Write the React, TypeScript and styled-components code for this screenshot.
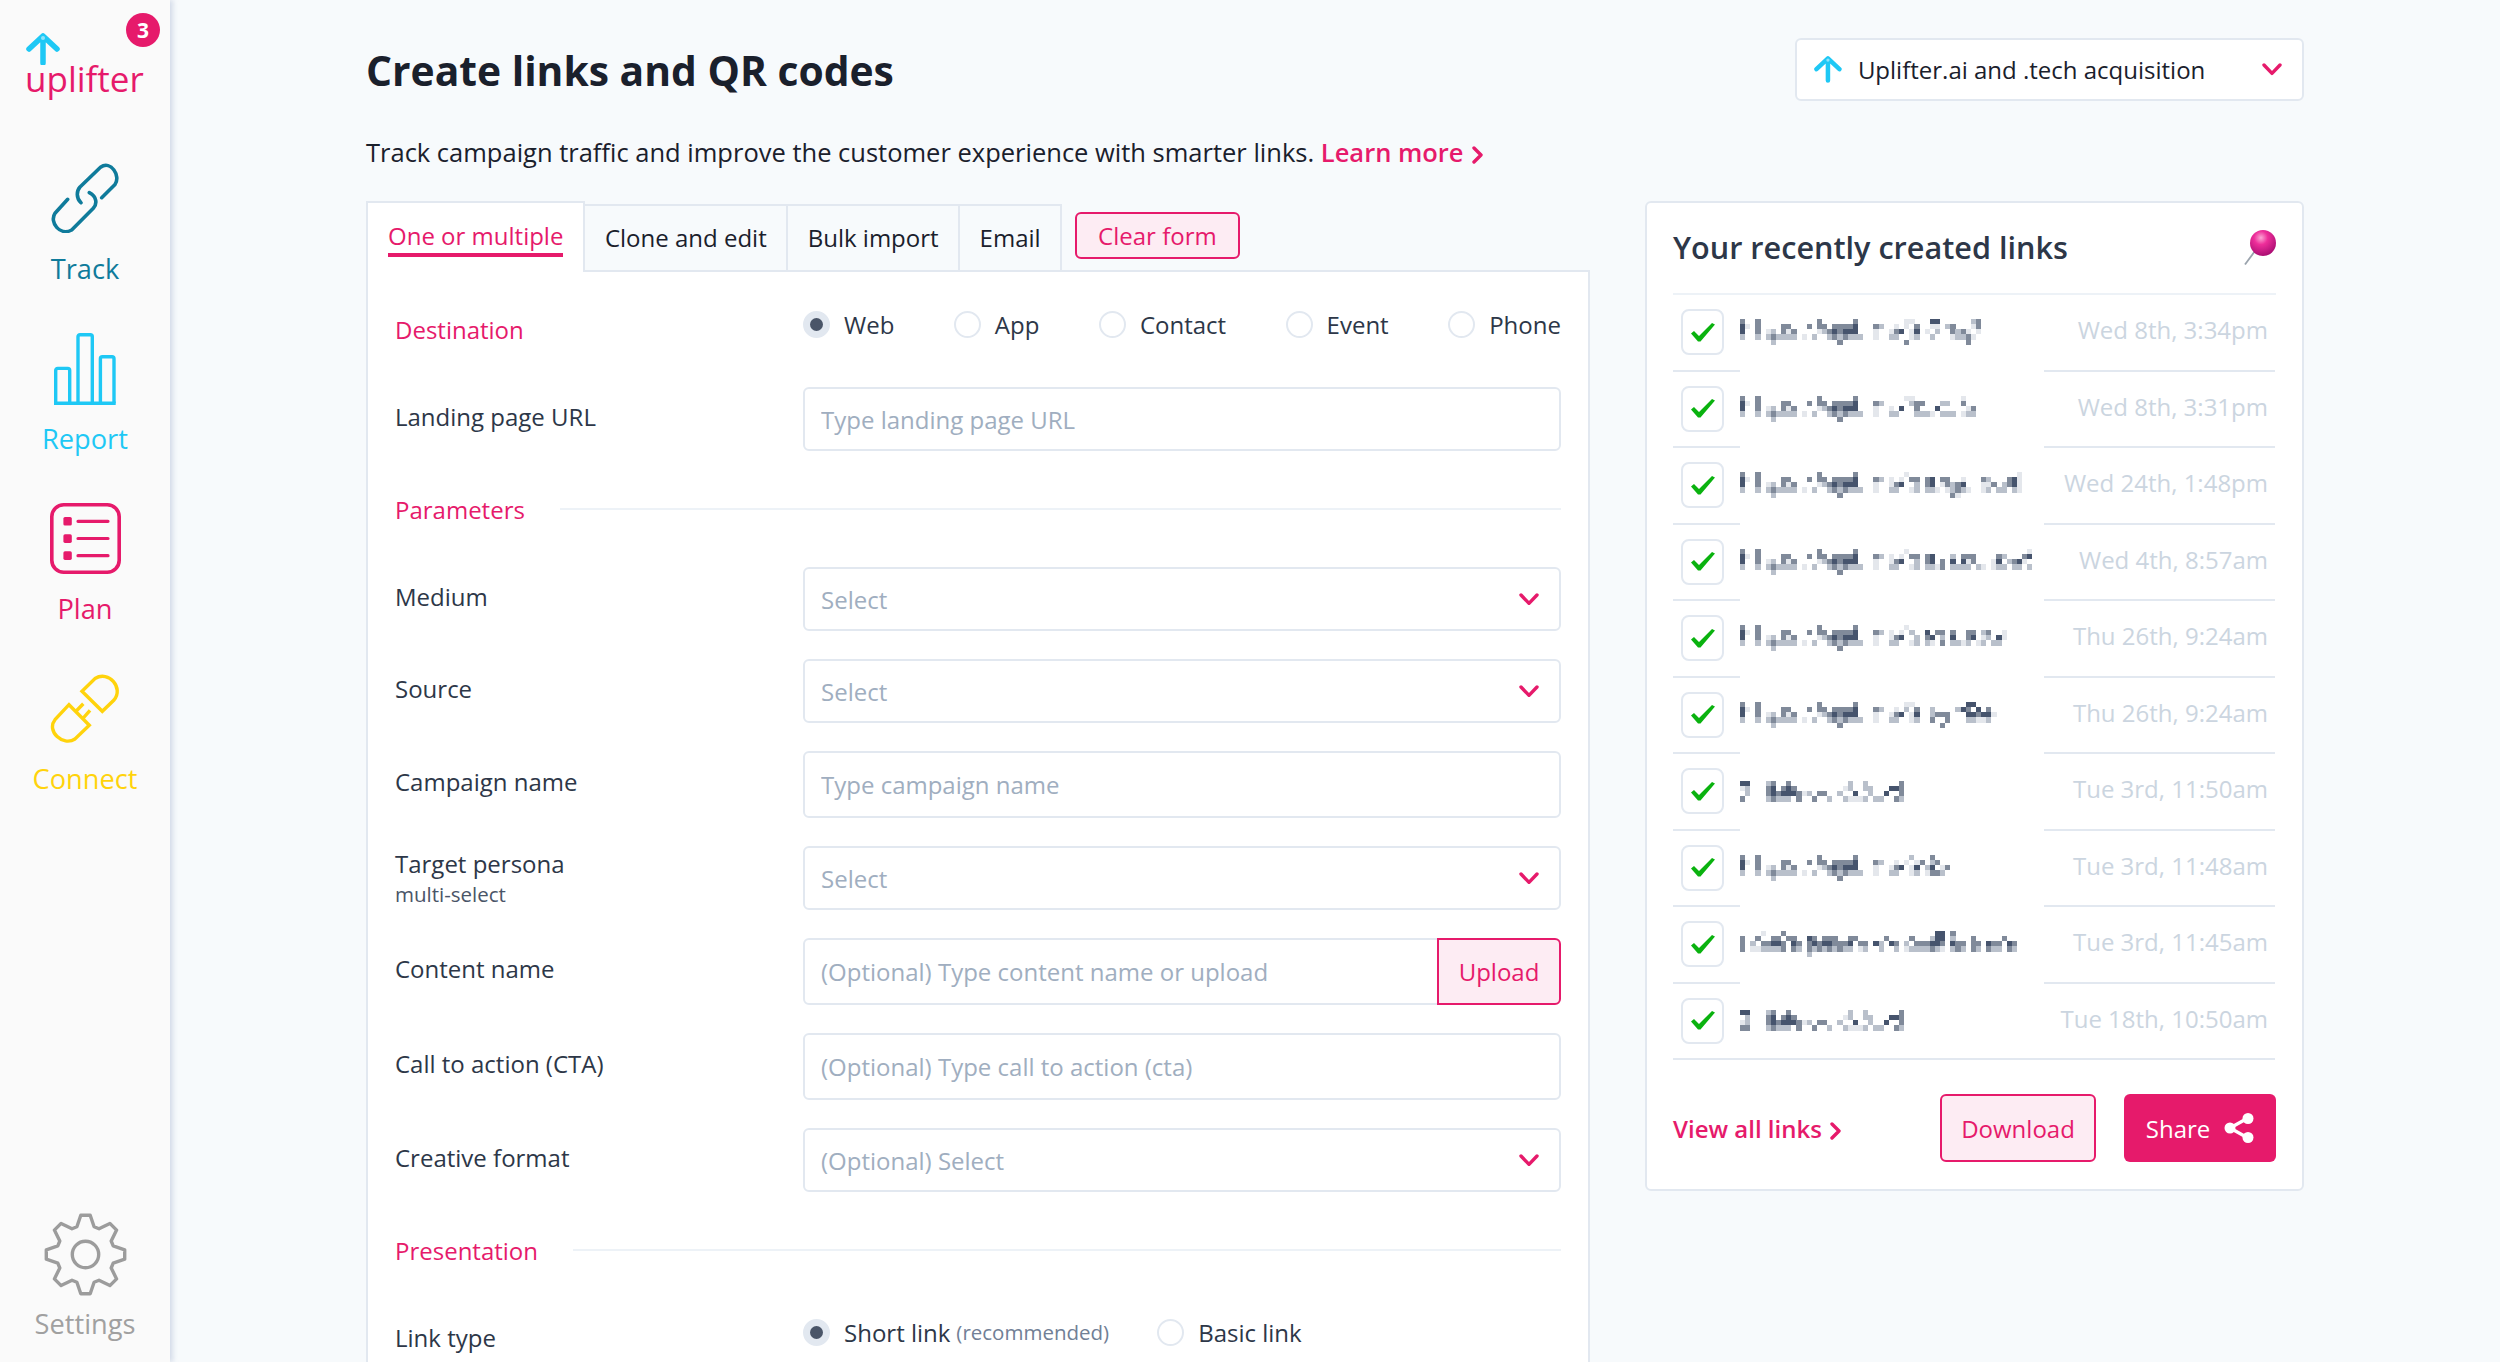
import styled, { createGlobalStyle } from "styled-components";

const pink = "#e61a6b";
const border = "#e2e8f0";

const GlobalStyle = createGlobalStyle`
  html, body {
    margin: 0;
    padding: 0;
    height: 100%;
    background: #f7fafc;
    font-family: "Open Sans", "Noto Sans", sans-serif;
    font-size: 24px;
    color: #2d3748;
    overflow: hidden;
  }
  * { box-sizing: border-box; }
  input::placeholder { color: #a0aec0; opacity: 1; }
`;

const Page = styled.div`
  display: flex;
  height: 100vh;
  overflow: hidden;
`;

const Sidebar = styled.aside`
  flex: 0 0 170px;
  display: flex;
  flex-direction: column;
  align-items: center;
  padding-bottom: 20px;
  background: #fafafa;
  box-shadow: 3px 0 5px rgba(160, 174, 205, 0.4);
  z-index: 2;
`;

const LogoBlock = styled.div`
  position: relative;
  align-self: stretch;
  height: 163px;
  padding: 33px 0 0 25px;
`;

const LogoArrow = styled.div`
  margin-left: 1px;
  height: 32px;
`;

const LogoText = styled.div`
  margin-top: -4px;
  font-size: 35px;
  line-height: 36px;
  color: ${pink};
`;

const Badge = styled.span`
  position: absolute;
  top: 13px;
  left: 126px;
  width: 34px;
  height: 34px;
  border-radius: 50%;
  background: ${pink};
  color: #fff;
  font-size: 21px;
  font-weight: 700;
  line-height: 34px;
  text-align: center;
`;

const NavItem = styled.a<{ $color: string }>`
  display: flex;
  flex-direction: column;
  align-items: center;
  height: 170px;
  color: ${(p) => p.$color};
  font-size: 27.2px;
`;

const SettingsItem = styled.a`
  display: flex;
  flex-direction: column;
  align-items: center;
  margin-top: auto;
  color: #a0a0a0;
  font-size: 27.2px;
`;

const NavIcon = styled.div`
  height: 70px;
`;

const NavLabel = styled.span<{ $gap?: number }>`
  margin-top: ${(p) => p.$gap ?? 18}px;
  line-height: 36px;
`;

const Main = styled.main`
  flex: 1;
  padding: 38px 196px 0;
  min-width: 0;
`;

const Header = styled.header`
  display: flex;
  align-items: center;
  justify-content: space-between;
  height: 63px;
`;

const Title = styled.h1`
  margin: 0;
  font-size: 40.8px;
  font-weight: 700;
  color: #1a202c;
`;

const AccountSelect = styled.div`
  display: flex;
  align-items: center;
  width: 509px;
  height: 63px;
  padding: 0 20px 0 17px;
  background: #fff;
  border: 2px solid ${border};
  border-radius: 6px;
  color: #1a202c;
`;

const AccountName = styled.span`
  flex: 1;
  margin-left: 16px;
`;

const Intro = styled.p`
  margin: 33px 0 0;
  font-size: 25.5px;
  line-height: 36px;
  color: #1a202c;
`;

const TextLink = styled.a`
  color: ${pink};
  font-weight: 600;
  white-space: nowrap;
  svg { margin-left: 8px; }
`;

const Columns = styled.div`
  display: grid;
  grid-template-columns: 1224px 659px;
  justify-content: space-between;
  align-items: start;
  margin-top: 31px;
`;

const TabBar = styled.div`
  display: flex;
  align-items: flex-end;
  height: 69px;
`;

const ActiveTab = styled.div`
  position: relative;
  z-index: 1;
  height: 71px;
  margin-bottom: -2px;
  padding: 16px 20px 0;
  background: #fff;
  border: 2px solid ${border};
  border-bottom: 0;
  color: ${pink};
`;

const ActiveTabText = styled.span`
  display: block;
  line-height: 34px;
  border-bottom: 4px solid ${pink};
`;

const Tab = styled.div`
  display: flex;
  align-items: center;
  height: 66px;
  padding: 0 19.5px 2px;
  border: 2px solid ${border};
  border-left-width: 0;
  border-bottom: 0;
  color: #1a202c;
`;

const ClearButton = styled.button`
  align-self: flex-start;
  height: 47px;
  margin: 11px 0 0 13px;
  padding: 0 21px;
  background: #fdecf3;
  border: 2px solid ${pink};
  border-radius: 6px;
  color: ${pink};
  font: inherit;
`;

const Panel = styled.section`
  height: 1200px;
  padding: 25px 27px 0;
  background: #fff;
  border: 2px solid ${border};
`;

const Row = styled.div`
  display: grid;
  grid-template-columns: 408px 1fr;
  align-items: center;
  margin-bottom: 28px;
`;

const RadioRow = styled.div`
  display: grid;
  grid-template-columns: 408px 1fr;
  align-items: start;
  height: 62px;
  padding-top: 14px;
  margin-bottom: 28px;
`;

const Label = styled.label`
  display: block;
  line-height: 38px;
  padding-bottom: 5px;
`;

const RadioLabel = styled(Label)<{ $accent?: boolean }>`
  padding: 0;
  color: ${(p) => (p.$accent ? pink : "inherit")};
`;

const StackedLabel = styled.label`
  display: block;
`;

const StackedMain = styled.div`
  line-height: 33px;
`;

const SubLabel = styled.div`
  font-size: 20.5px;
  line-height: 29px;
  color: #4a5568;
`;

const SectionHeading = styled.div<{ $after?: number }>`
  display: flex;
  align-items: center;
  gap: 35px;
  height: 60px;
  margin-bottom: ${(p) => p.$after ?? 28}px;
  color: ${pink};
  &::after {
    content: "";
    flex: 1;
    height: 2px;
    background: #edf2f7;
  }
`;

const RadioGroup = styled.div<{ $spread?: boolean }>`
  display: flex;
  justify-content: ${(p) => (p.$spread ? "space-between" : "flex-start")};
  gap: 48px;
  height: 26px;
  align-items: center;
`;

const RadioOption = styled.span`
  display: flex;
  align-items: center;
  gap: 14px;
  color: #2d3748;
`;

const RadioDot = styled.span<{ $on?: boolean }>`
  display: flex;
  align-items: center;
  justify-content: center;
  width: 27px;
  height: 27px;
  border-radius: 50%;
  background: ${(p) => (p.$on ? border : "#fff")};
  border: 2px solid ${border};
  &::after {
    content: "";
    display: ${(p) => (p.$on ? "block" : "none")};
    width: 13px;
    height: 13px;
    border-radius: 50%;
    background: #4a5568;
  }
`;

const Note = styled.span`
  margin-left: -8px;
  font-size: 20.5px;
  color: #718096;
`;

const TextInput = styled.input<{ $grouped?: boolean }>`
  display: block;
  width: 100%;
  height: ${(p) => (p.$grouped ? 67 : 64)}px;
  padding: 0 16px;
  background: #fff;
  border: 2px solid ${border};
  border-radius: ${(p) => (p.$grouped ? "6px 0 0 6px" : "6px")};
  font: inherit;
  outline: none;
`;

const TallInput = styled(TextInput)`
  height: 67px;
  border-radius: 6px;
`;

const SelectBox = styled.div`
  display: flex;
  align-items: center;
  justify-content: space-between;
  height: 64px;
  padding: 0 20px 0 16px;
  background: #fff;
  border: 2px solid ${border};
  border-radius: 6px;
  color: #a0aec0;
`;

const InputGroup = styled.div`
  display: flex;
`;

const UploadButton = styled.button`
  flex: 0 0 124px;
  height: 67px;
  margin-left: -2px;
  background: #fdecf3;
  border: 2px solid ${pink};
  border-radius: 0 6px 6px 0;
  color: ${pink};
  font: inherit;
`;

const Card = styled.section`
  height: 990px;
  padding: 0 26px;
  background: #fff;
  border: 2px solid ${border};
  border-radius: 6px;
`;

const CardHead = styled.div`
  display: flex;
  align-items: center;
  justify-content: space-between;
  height: 92px;
  padding-bottom: 2px;
  border-bottom: 2px solid #edf2f7;
`;

const CardTitle = styled.h2`
  margin: 0;
  font-size: 30.6px;
  font-weight: 600;
  color: #2d3748;
`;

const LinkRow = styled.div`
  display: grid;
  grid-template-columns: 67px 304px 231px;
  height: 76.5px;
`;

const CheckCell = styled.div`
  display: flex;
  align-items: center;
  padding-left: 8px;
  border-bottom: 2px solid ${border};
`;

const CheckBox = styled.span`
  display: flex;
  align-items: center;
  justify-content: center;
  width: 43px;
  height: 46px;
  border: 2px solid ${border};
  border-radius: 8px;
`;

const UrlCell = styled.div<{ $last?: boolean }>`
  display: flex;
  align-items: center;
  border-bottom: 2px solid ${(p) => (p.$last ? border : "transparent")};
`;

const DateCell = styled.div`
  display: flex;
  align-items: center;
  justify-content: flex-end;
  padding: 0 7px 5px 0;
  border-bottom: 2px solid ${border};
  color: #cbd5e0;
  white-space: nowrap;
`;

const CardFooter = styled.div`
  display: flex;
  align-items: center;
  height: 68px;
  margin-top: 34px;
`;

const DownloadButton = styled.button`
  width: 156px;
  height: 68px;
  margin-left: auto;
  background: #fdecf3;
  border: 2px solid ${pink};
  border-radius: 6px;
  color: ${pink};
  font: inherit;
`;

const ShareButton = styled.button`
  display: flex;
  align-items: center;
  justify-content: center;
  gap: 14px;
  width: 152px;
  height: 68px;
  margin-left: 28px;
  background: ${pink};
  border: 0;
  border-radius: 6px;
  color: #fff;
  font: inherit;
  font-weight: 500;
`;

const MosaicSvg = styled.svg`
  display: block;
  filter: blur(0.3px);
`;

const shades = ["", "#e4e7ec", "#b9c0cb", "#808a9a", "#46546d"];

// the urls are pixelated in the original, so they are a drawing here too
function Mosaic({ bands }: { bands: string[] }) {
  const cols = Math.max(...bands.map((b) => b.length));
  return (
    <MosaicSvg width={cols * 5.13} height={bands.length * 5.13} viewBox={`0 0 ${cols} ${bands.length}`} shapeRendering="crispEdges">
      {bands.map((band, y) =>
        band.split("").map((c, x) =>
          c === "0" ? null : <rect key={`${x}-${y}`} x={x} y={y} width={1.02} height={1.02} fill={shades[Number(c)]} />
        )
      )}
    </MosaicSvg>
  );
}

const prefix = [
  "3003000000000003000000300",
  "4103000033000303303333400",
  "4003012031300001234344400",
  "2002023222201020023232220",
  "0000002000000000000300000",
];

const withPrefix = (suffix: string[]) => prefix.map((p, i) => p + "0" + suffix[i]);

const links = [
  {
    date: "Wed 8th, 3:34pm",
    bands: withPrefix([
      "000000110004400000023",
      "320010103001102300013",
      "100134014010200323101",
      "100220012002000122310",
      "000000300000000000300",
    ]),
  },
  {
    date: "Wed 8th, 3:31pm",
    bands: withPrefix([
      "000000110000000001000",
      "320000023300022003000",
      "100104003000400000130",
      "100220002221022201220",
      "000000000000000000000",
    ]),
  },
  {
    date: "Wed 24th, 1:48pm",
    bands: withPrefix([
      "00000010000000000000000000001",
      "32010103303403300100032000341",
      "10013400203401323400011302341",
      "10022001202210123210012022021",
      "00000000000000031000000000000",
    ]),
  },
  {
    date: "Wed 4th, 8:57am",
    bands: withPrefix([
      "0000001000000000000000000000001",
      "3201010330340002033300003200034",
      "1001340020340304041300014023410",
      "1002200120221302222021012202202",
      "0000000000000000000000000000000",
    ]),
  },
  {
    date: "Thu 26th, 9:24am",
    bands: withPrefix([
      "00000010000000000000000000",
      "32010102004033030033023001",
      "10013400203402040034012041",
      "10022001202103022120120220",
      "00000000000000000000000000",
    ]),
  },
  {
    date: "Thu 26th, 9:24am",
    bands: withPrefix([
      "000000110000000000440000",
      "320010203002000024304030",
      "100134014002333000443441",
      "100220012003003000221120",
      "000000000000030000000000",
    ]),
  },
  {
    date: "Tue 3rd, 11:50am",
    bands: [
      "44000230030000000000020020000003",
      "12000340343000000000120022000443",
      "02000343444312033002004002004003",
      "30000232220300300200211120220032",
    ],
  },
  {
    date: "Tue 3rd, 11:48am",
    bands: withPrefix([
      "000000020003000",
      "320010101302300",
      "100134014024013",
      "100220012013320",
      "000000000000000",
    ]),
  },
  {
    date: "Tue 3rd, 11:45am",
    bands: [
      "0000100030000000000000000000000000000044030000000000000",
      "3003003303300430333003300000300003000244020003000003000",
      "3020334430430343443334033042043020333443043303304330430",
      "3011222230320323232322012002002012222321023203203220320",
      "0000000000000200000000000000000000000000000000000000000",
    ],
  },
  {
    date: "Tue 18th, 10:50am",
    bands: [
      "44000230030000000000020020000003",
      "02000340343000000000120022000443",
      "12000343444312033002004002004003",
      "33000232220300300200211120220032",
    ],
  },
];

const Chevron = ({ size = 20, color = pink }: { size?: number; color?: string }) => (
  <svg width={size} height={size * 0.62} viewBox="0 0 20 12.4" fill="none" stroke={color} strokeWidth="3.4" strokeLinecap="round" strokeLinejoin="round">
    <polyline points="2,2 10,10.4 18,2" />
  </svg>
);

const ChevronRight = () => (
  <svg width="11" height="18" viewBox="0 0 11 18" fill="none" stroke={pink} strokeWidth="3.4" strokeLinecap="round" strokeLinejoin="round" style={{ verticalAlign: "-2px" }}>
    <polyline points="2,2 9,9 2,16" />
  </svg>
);

const UpArrow = ({ scale = 1 }: { scale?: number }) => (
  <svg width={34 * scale} height={32 * scale} viewBox="0 0 34 32" fill="none" stroke="#1ec8f5" strokeWidth="5.5" strokeLinecap="round" strokeLinejoin="round" style={{ display: "block" }}>
    <path d="M17 30V4M3 16 17 3l14 13" />
    <circle cx="17" cy="5" r="2" fill="#8fe3fa" stroke="none" />
  </svg>
);

const TrackIcon = () => (
  <svg width="70" height="70" viewBox="0 0 70 70" fill="none" stroke="#0f7b9b" strokeWidth="3.6" strokeLinecap="round" strokeLinejoin="round">
    <path d="M51.7 34.7 65 21.5C71 13 61-3 50.5 4.2L30 24c-3.5 4-4 11 1 15.7" />
    <path d="M17.7 36.3 5 50.3c-6 9 5 23 16.7 16.7L43.3 45.3c4-4.5 3.7-11.5-4-15.6" />
  </svg>
);

const ReportIcon = () => (
  <svg width="63" height="72" viewBox="0 0 63 72" fill="none" stroke="#1ec8f5" strokeWidth="3.4" strokeLinejoin="round">
    <path d="M1.7 70.3V37.4a2 2 0 0 1 2-2h10a2 2 0 0 1 2 2v32.9" />
    <path d="M24 70.3V3.7a2 2 0 0 1 2-2h10.3a2 2 0 0 1 2 2v66.6" />
    <path d="M46.4 70.3V25.7a2 2 0 0 1 2-2H58a2 2 0 0 1 2 2v44.6" />
    <path d="M0 70.3h61.7" />
  </svg>
);

const PlanIcon = () => (
  <svg width="71" height="71" viewBox="0 0 71 71" fill="none" stroke={pink} strokeWidth="3.6" strokeLinecap="round">
    <rect x="1.8" y="1.8" width="67.4" height="67.4" rx="12" />
    <g fill={pink} stroke="none">
      <rect x="13.4" y="14" width="8.4" height="8.6" rx="1.6" />
      <rect x="13.4" y="31.3" width="8.4" height="8.6" rx="1.6" />
      <rect x="13.4" y="48.3" width="8.4" height="8.6" rx="1.6" />
    </g>
    <path d="M28 18.3h30M28 35.5h30M28 52.7h30" strokeWidth="3.2" />
  </svg>
);

const ConnectIcon = () => (
  <svg width="71" height="71" viewBox="0 0 71 71" fill="none" stroke="#ffd30c" strokeWidth="3.4" strokeLinejoin="miter">
    <path d="M32 18.3 52.3 38.3 64 27C74 15 59-3 45 5.5Z" />
    <path d="M19 31.7 39.3 52.3 25 66C13 74-4 58 5 46.7Z" />
    <path d="M26 38.3 33.3 30.7M33.3 45 40 37.3" />
  </svg>
);

// eight teeth, one straight up
const gearPath = (() => {
  const cx = 42.5;
  const cy = 41.5;
  const pts: string[] = [];
  for (let i = 0; i < 8; i++) {
    const a = (i * Math.PI) / 4 - Math.PI / 2;
    const at = (r: number, d: number) =>
      `${(cx + r * Math.cos(a + d)).toFixed(1)} ${(cy + r * Math.sin(a + d)).toFixed(1)}`;
    pts.push(at(29, -0.3), at(39.5, -0.12), at(39.5, 0.12), at(29, 0.3));
  }
  return `M${pts.join("L")}Z`;
})();

const SettingsIcon = () => (
  <svg width="85" height="83" viewBox="0 0 85 83" fill="none" stroke="#9c9c9c" strokeWidth="3.4" strokeLinejoin="round" style={{ display: "block" }}>
    <path d={gearPath} />
    <circle cx="42.5" cy="41.5" r="13.2" />
  </svg>
);

const PinIcon = () => (
  <svg width="32" height="35" viewBox="0 0 32 35">
    <defs>
      <radialGradient id="pinBall" cx="0.42" cy="0.3" r="0.75">
        <stop offset="0" stopColor="#fba6d4" />
        <stop offset="0.35" stopColor="#ee2e9a" />
        <stop offset="1" stopColor="#a30a6e" />
      </radialGradient>
    </defs>
    <path d="M1 34.5 11 21" stroke="#9aa3ad" strokeWidth="1.8" fill="none" />
    <circle cx="19" cy="13" r="13" fill="url(#pinBall)" />
  </svg>
);

const CheckIcon = () => (
  <svg width="24" height="19" viewBox="0 0 24 19">
    <path d="M0 10.5 3 8l5 5L21 0l3 1.5L9.5 18.5H7Z" fill="#0ab20f" />
  </svg>
);

const ShareIcon = () => (
  <svg width="30" height="30" viewBox="0 0 30 30" fill="#fff" stroke="#fff">
    <path d="M6 15 24 5M6 15l18 10" strokeWidth="3.2" fill="none" />
    <circle cx="6" cy="15" r="5.5" stroke="none" />
    <circle cx="24" cy="5.5" r="5.5" stroke="none" />
    <circle cx="24" cy="24.5" r="5.5" stroke="none" />
  </svg>
);

const navItems = [
  { label: "Track", color: "#0f7b9b", icon: <TrackIcon /> },
  { label: "Report", color: "#1ec8f5", icon: <ReportIcon /> },
  { label: "Plan", color: pink, icon: <PlanIcon /> },
  { label: "Connect", color: "#ffd30c", icon: <ConnectIcon /> },
];

const destinations = ["Web", "App", "Contact", "Event", "Phone"];

export default function App() {
  return (
    <Page>
      <GlobalStyle />
      <Sidebar>
        <LogoBlock>
          <LogoArrow>
            <UpArrow />
          </LogoArrow>
          <LogoText>uplifter</LogoText>
          <Badge>3</Badge>
        </LogoBlock>
        {navItems.map((item) => (
          <NavItem key={item.label} $color={item.color}>
            <NavIcon>{item.icon}</NavIcon>
            <NavLabel>{item.label}</NavLabel>
          </NavItem>
        ))}
        <SettingsItem>
          <SettingsIcon />
          <NavLabel $gap={10}>Settings</NavLabel>
        </SettingsItem>
      </Sidebar>

      <Main>
        <Header>
          <Title>Create links and QR codes</Title>
          <AccountSelect>
            <UpArrow scale={0.82} />
            <AccountName>Uplifter.ai and .tech acquisition</AccountName>
            <Chevron />
          </AccountSelect>
        </Header>
        <Intro>
          Track campaign traffic and improve the customer experience with smarter links.{" "}
          <TextLink>
            Learn more
            <ChevronRight />
          </TextLink>
        </Intro>

        <Columns>
          <div>
            <TabBar>
              <ActiveTab>
                <ActiveTabText>One or multiple</ActiveTabText>
              </ActiveTab>
              <Tab>Clone and edit</Tab>
              <Tab>Bulk import</Tab>
              <Tab>Email</Tab>
              <ClearButton>Clear form</ClearButton>
            </TabBar>
            <Panel>
              <RadioRow>
                <RadioLabel $accent>Destination</RadioLabel>
                <RadioGroup $spread>
                  {destinations.map((d, i) => (
                    <RadioOption key={d}>
                      <RadioDot $on={i === 0} />
                      {d}
                    </RadioOption>
                  ))}
                </RadioGroup>
              </RadioRow>
              <Row>
                <Label>Landing page URL</Label>
                <TextInput placeholder="Type landing page URL" />
              </Row>

              <SectionHeading>Parameters</SectionHeading>
              <Row>
                <Label>Medium</Label>
                <SelectBox>
                  Select
                  <Chevron />
                </SelectBox>
              </Row>
              <Row>
                <Label>Source</Label>
                <SelectBox>
                  Select
                  <Chevron />
                </SelectBox>
              </Row>
              <Row>
                <Label>Campaign name</Label>
                <TallInput placeholder="Type campaign name" />
              </Row>
              <Row>
                <StackedLabel>
                  <StackedMain>Target persona</StackedMain>
                  <SubLabel>multi-select</SubLabel>
                </StackedLabel>
                <SelectBox>
                  Select
                  <Chevron />
                </SelectBox>
              </Row>
              <Row>
                <Label>Content name</Label>
                <InputGroup>
                  <TextInput $grouped placeholder="(Optional) Type content name or upload" />
                  <UploadButton>Upload</UploadButton>
                </InputGroup>
              </Row>
              <Row>
                <Label>Call to action (CTA)</Label>
                <TallInput placeholder="(Optional) Type call to action (cta)" />
              </Row>
              <Row>
                <Label>Creative format</Label>
                <SelectBox>
                  (Optional) Select
                  <Chevron />
                </SelectBox>
              </Row>

              <SectionHeading $after={25}>Presentation</SectionHeading>
              <RadioRow>
                <RadioLabel>Link type</RadioLabel>
                <RadioGroup>
                  <RadioOption>
                    <RadioDot $on />
                    Short link
                    <Note>(recommended)</Note>
                  </RadioOption>
                  <RadioOption>
                    <RadioDot />
                    Basic link
                  </RadioOption>
                </RadioGroup>
              </RadioRow>
            </Panel>
          </div>

          <Card>
            <CardHead>
              <CardTitle>Your recently created links</CardTitle>
              <PinIcon />
            </CardHead>
            {links.map((link, i) => (
              <LinkRow key={i}>
                <CheckCell>
                  <CheckBox>
                    <CheckIcon />
                  </CheckBox>
                </CheckCell>
                <UrlCell $last={i === links.length - 1}>
                  <Mosaic bands={link.bands} />
                </UrlCell>
                <DateCell>{link.date}</DateCell>
              </LinkRow>
            ))}
            <CardFooter>
              <TextLink>
                View all links
                <ChevronRight />
              </TextLink>
              <DownloadButton>Download</DownloadButton>
              <ShareButton>
                Share
                <ShareIcon />
              </ShareButton>
            </CardFooter>
          </Card>
        </Columns>
      </Main>
    </Page>
  );
}
